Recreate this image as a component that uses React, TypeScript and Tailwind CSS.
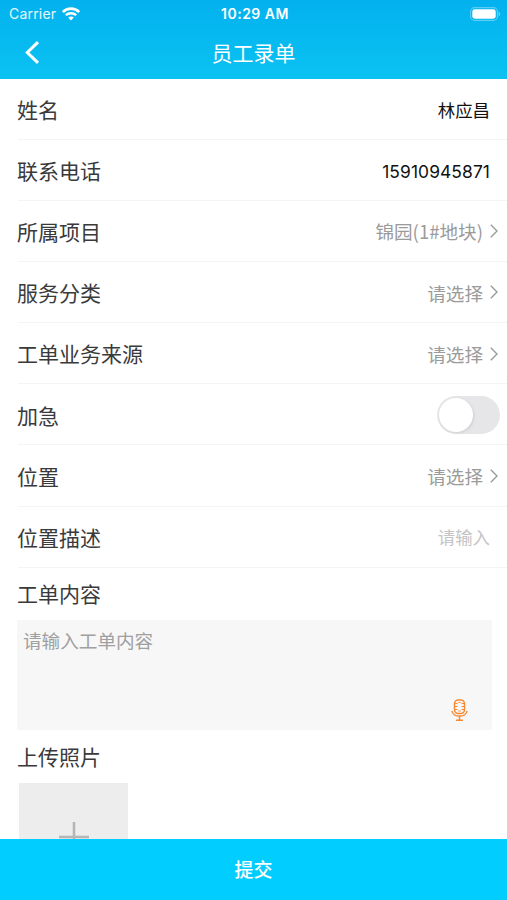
import { useState } from 'react';

interface Field {
  label: string;
  value: string;
  kind: 'text' | 'phone' | 'select' | 'switch' | 'input';
}

const fields: Field[] = [
  { label: '姓名', value: '林应昌', kind: 'text' },
  { label: '联系电话', value: '15910945871', kind: 'phone' },
  { label: '所属项目', value: '锦园(1#地块)', kind: 'select' },
  { label: '服务分类', value: '请选择', kind: 'select' },
  { label: '工单业务来源', value: '请选择', kind: 'select' },
  { label: '加急', value: '', kind: 'switch' },
  { label: '位置', value: '请选择', kind: 'select' },
  { label: '位置描述', value: '请输入', kind: 'input' },
];

const WifiIcon = () => (
  <svg width="18" height="14" viewBox="0 0 18 14" fill="none" stroke="white">
    <path d="M.8 5.1C5.3.5 12.7.5 17.2 5.1" strokeWidth="2.6" />
    <path d="M3.8 8.2c2.9-2.7 7.5-2.7 10.4 0" strokeWidth="2.4" />
    <path d="M6.2 10.5c1.6-1.4 4-1.4 5.6 0L9 13.5z" fill="white" stroke="none" />
  </svg>
);

const BatteryIcon = () => (
  <svg width="31" height="14" viewBox="0 0 31 14" fill="none">
    <rect x="0.6" y="0.6" width="26.8" height="12.8" rx="4" stroke="white" strokeOpacity="0.35" strokeWidth="1.1" />
    <rect x="2.3" y="2.3" width="23.4" height="9.4" rx="2.4" fill="white" />
    <path d="M28.6 4.7c2.1.7 2.1 3.900 0 4.600z" fill="white" fillOpacity="0.4" />
  </svg>
);

const ChevronRight = () => (
  <svg width="8" height="14" viewBox="0 0 8 14" fill="none" stroke="#9b9b9b" strokeWidth="1.4">
    <path d="M.8.8 7 7 .8 13.2" />
  </svg>
);

const MicIcon = () => (
  <svg width="17" height="23" viewBox="0 0 17 23" fill="none" stroke="#f68b35" strokeWidth="1.5">
    <rect x="3.5" y="1" width="10" height="13.5" rx="3.8" />
    <path d="M4 4.5h2.5M4 7.500h2.500M4 10.500h2.500M10.500 4.500H13M10.500 7.500H13M10.500 10.500H13" strokeWidth="1" />
    <path d="M7 3.500h3M7 12h3" strokeWidth="0.8" />
    <path d="M1 12c.8 6.800 14.200 6.800 15 0M8.500 17v4M5 21.200h7" />
  </svg>
);

const FieldRow = ({ label, value, kind }: Field) => {
  const [checked, setChecked] = useState(false);

  return (
    <div className="ml-[18px] flex h-[61.2px] shrink-0 items-center justify-between border-b border-[#f4f4f4] pt-[2px] first:h-[60.5px]">
      <span className="-ml-px text-[21px] text-[#3a3a3a]">{label}</span>
      {kind === 'text' && (
        <span className="mr-[17px] text-[17.4px] text-[#111]">{value}</span>
      )}
      {kind === 'phone' && (
        <span className="mr-[17px] pt-[2px] font-[Inter,sans-serif] text-[17.4px] tracking-[0.1px] text-[#111]">
          {value}
        </span>
      )}
      {kind === 'select' && (
        <span className="mr-[9px] flex items-center gap-[7px] pb-px text-[18.6px] text-[#9b9b9b]">
          {value}
          <ChevronRight />
        </span>
      )}
      {kind === 'switch' && (
        <button
          type="button"
          role="switch"
          aria-checked={checked}
          onClick={() => setChecked(!checked)}
          className={`mr-[7px] flex h-[38px] w-[63px] items-center rounded-full p-[2px] ${
            checked ? 'justify-end bg-[#02cdff]' : 'justify-start bg-[#e6e6e9]'
          }`}
        >
          <span className="size-[34px] rounded-full bg-white shadow-[1px_1px_3px_rgba(0,0,0,0.1)]" />
        </button>
      )}
      {kind === 'input' && (
        <span className="mr-[17px] pb-px text-[17.4px] text-[#c4c4c6]">{value}</span>
      )}
    </div>
  );
};

const App = () => {
  return (
    <div className="flex h-[900px] w-[507px] flex-col overflow-hidden bg-white font-['Noto_Sans_CJK_SC',sans-serif]">
      <header className="h-[79px] shrink-0 bg-linear-to-b from-[#03b1ee] to-[#0bc2f1] text-white">
        <div className="grid h-[27px] grid-cols-3 items-center pr-[6px] pl-[9px] font-[Inter,sans-serif] text-[14px]">
          <div className="flex items-center gap-[6px] text-white/90">
            <span className="tracking-[0.2px]">Carrier</span>
            <WifiIcon />
          </div>
          <span className="text-center font-semibold tracking-[0.5px]">10:29 AM</span>
          <div className="flex justify-end">
            <BatteryIcon />
          </div>
        </div>
        <div className="grid h-[51px] grid-cols-[60px_1fr_60px] items-center">
          <button type="button" aria-label="返回" className="pl-[25px]">
            <svg width="15" height="23" viewBox="0 0 15 23" fill="none" stroke="white" strokeWidth="3">
              <path d="M13 1.200 2.300 11.500 13 21.800" />
            </svg>
          </button>
          <h1 className="text-center text-[21px]">员工录单</h1>
        </div>
      </header>

      <main className="flex min-h-0 flex-1 flex-col overflow-hidden">
        <div className="shrink-0">
          {fields.map((field) => (
            <FieldRow key={field.label} {...field} />
          ))}
        </div>

        <section className="shrink-0 pr-[15px] pl-[17px]">
          <h2 className="flex h-[52px] items-center text-[21px] text-[#3a3a3a]">工单内容</h2>
          <div className="flex h-[110px] flex-col justify-between bg-[#f7f7f7] pt-[6px] pr-[24px] pb-[8px] pl-[6px]">
            <p className="text-[18.6px] leading-[28px] text-[#a0a0a0]">请输入工单内容</p>
            <div className="flex justify-end">
              <MicIcon />
            </div>
          </div>
          <h2 className="flex h-[53px] items-center text-[21px] text-[#3a3a3a]">上传照片</h2>
          <div className="ml-[2px] flex h-[109px] w-[109px] items-center justify-center bg-[#ededed]">
            <svg width="30" height="30" viewBox="0 0 30 30" stroke="#b5b5b5" strokeWidth="2.5">
              <path d="M15 0v30M0 15h30" />
            </svg>
          </div>
        </section>
      </main>

      <button
        type="button"
        className="flex h-[61px] shrink-0 items-center justify-center bg-[#02cdff] text-[19px] font-medium text-white"
      >
        提交
      </button>
    </div>
  );
};

export default App;
